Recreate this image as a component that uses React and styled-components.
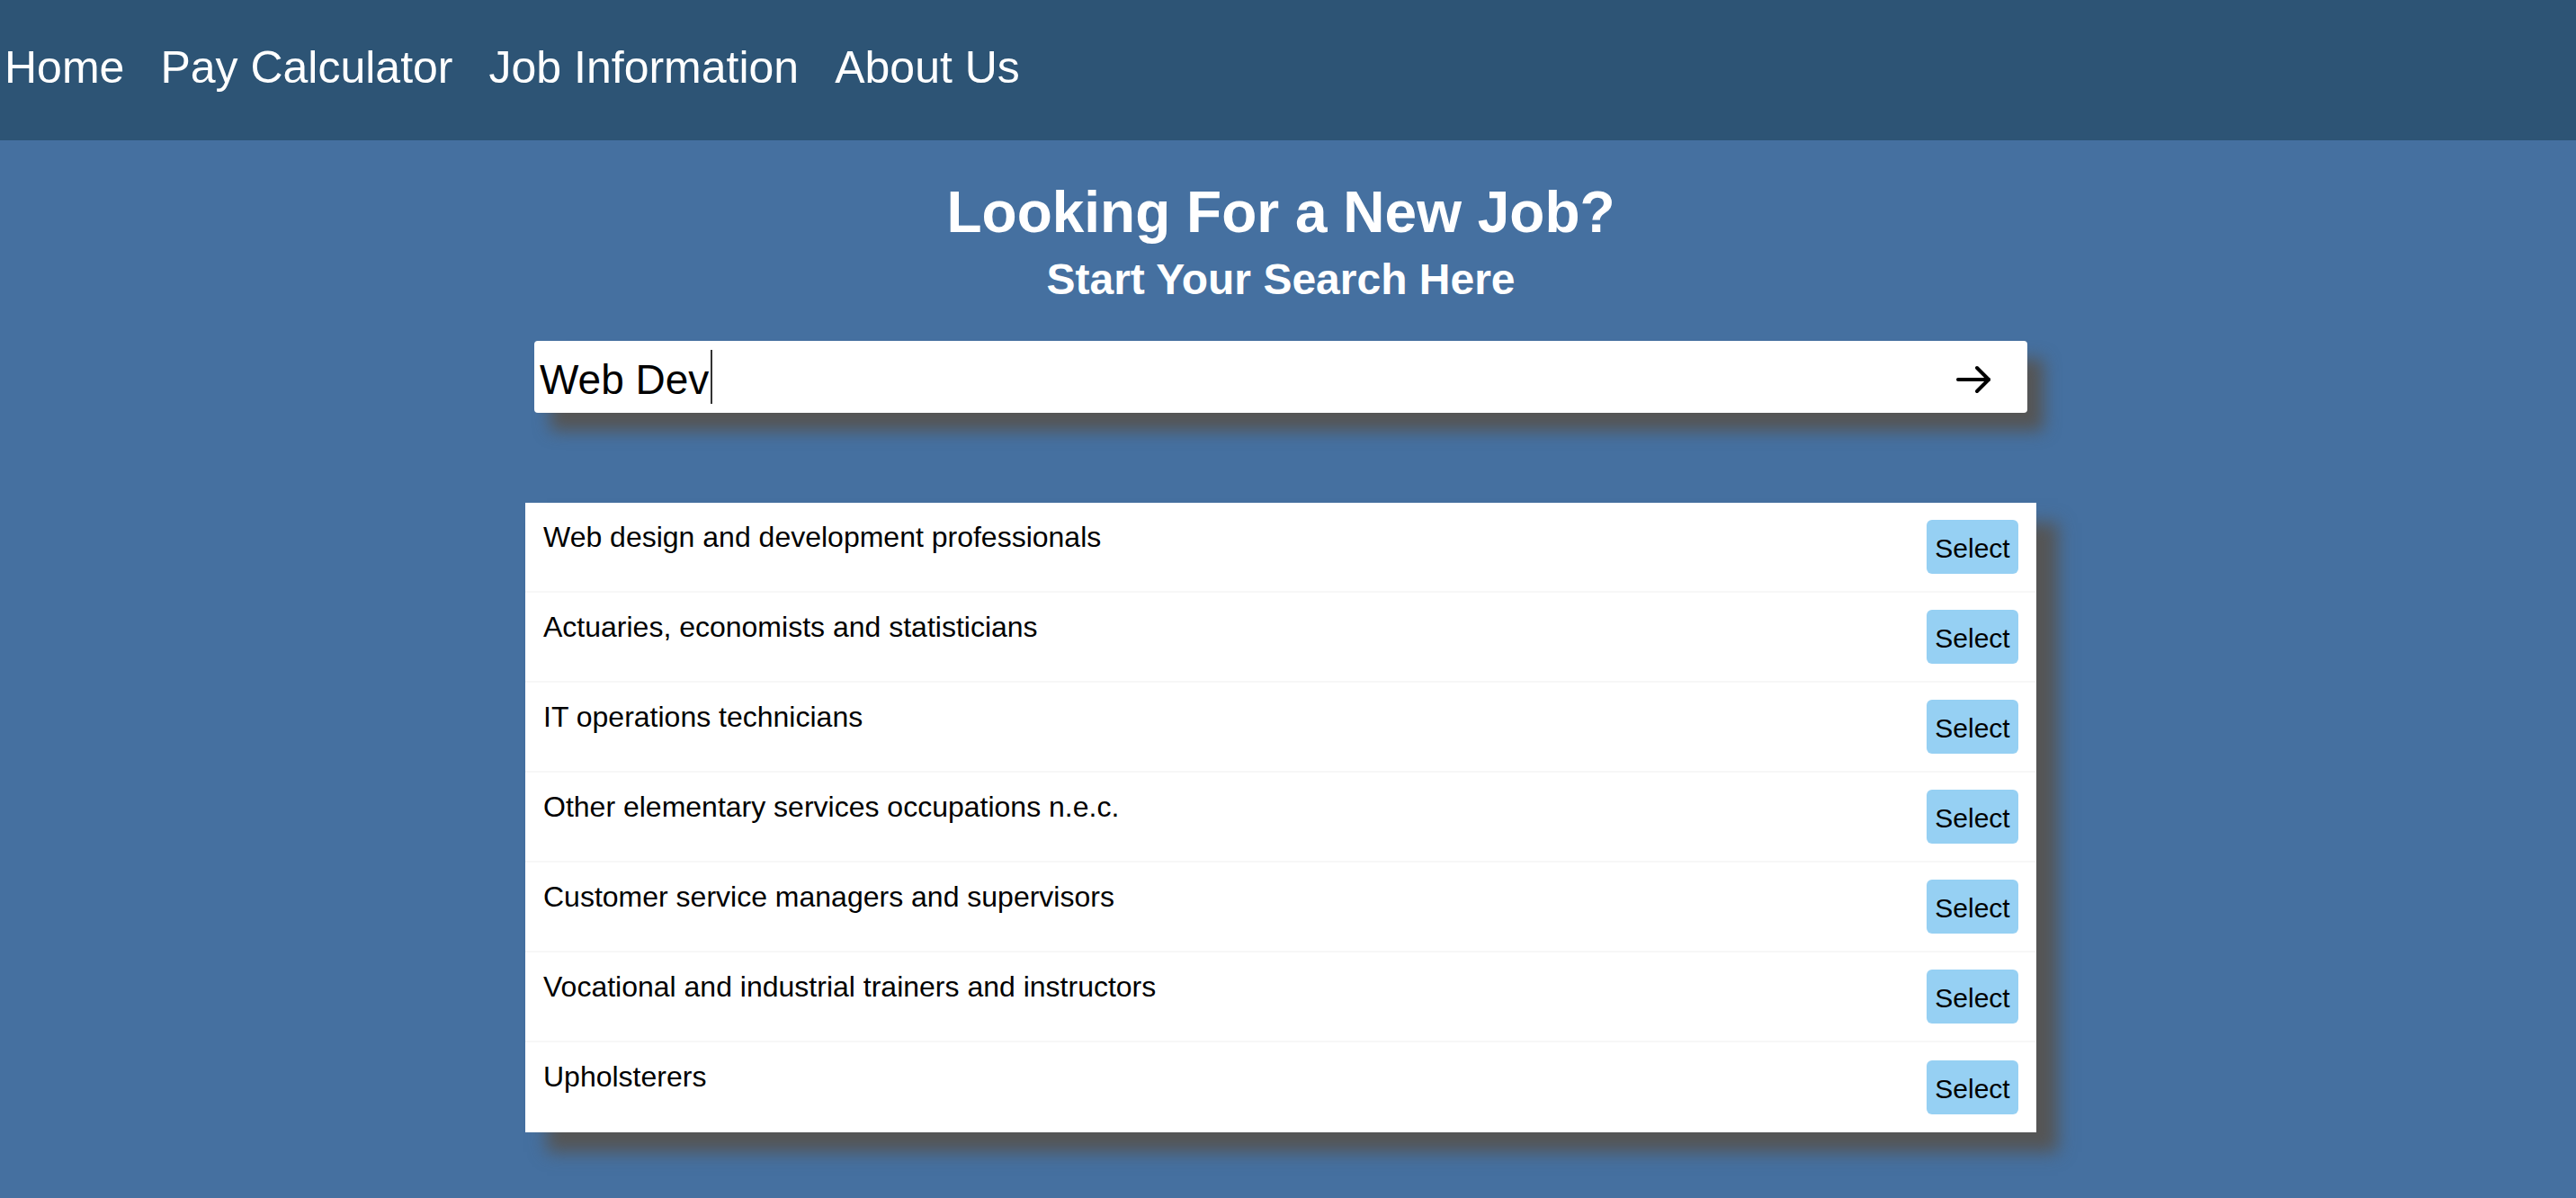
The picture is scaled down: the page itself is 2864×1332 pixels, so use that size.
import React, { useState } from 'react';
import styled, { createGlobalStyle } from 'styled-components';

const GlobalStyle = createGlobalStyle`
  html, body {
    margin: 0;
    padding: 0;
    background: #4570a0;
    font-family: "Liberation Sans", Arial, sans-serif;
  }
`;

const Page = styled.div`
  min-height: 100vh;
  background: #4570a0;
`;

const NavBar = styled.nav`
  height: 156px;
  background: #2d5475;
  display: flex;
  align-items: center;
  gap: 40px;
  padding: 0 0 6px 5px;
  box-sizing: border-box;
`;

const NavLink = styled.a`
  color: #fff;
  font-size: 50px;
  text-decoration: none;
  cursor: pointer;
`;

const Main = styled.main`
  display: flex;
  flex-direction: column;
  align-items: center;
  padding-right: 16px;
  padding-bottom: 40px;
`;

const Title = styled.h1`
  margin: 43px 0 0;
  color: #fff;
  font-size: 64px;
  font-weight: bold;
`;

const Subtitle = styled.h2`
  margin: 10px 0 0;
  color: #fff;
  font-size: 48px;
  font-weight: bold;
`;

const SearchBox = styled.form`
  margin-top: 41px;
  width: 1660px;
  height: 80px;
  background: #fff;
  border-radius: 4px;
  box-shadow: 18px 20px 18px #555;
  display: flex;
  align-items: center;
  padding: 0 40px 0 6px;
  box-sizing: border-box;
`;

const InputWrap = styled.div`
  position: relative;
  flex: 1;
  height: 100%;
  display: flex;
  align-items: center;
`;

const SearchInput = styled.input`
  width: 100%;
  border: none;
  outline: none;
  background: transparent;
  font-family: "Liberation Sans", Arial, sans-serif;
  font-size: 46px;
  color: #000;
  caret-color: transparent;
  padding: 5px 0 0;
`;

const CaretLayer = styled.div`
  position: absolute;
  inset: 0;
  display: flex;
  align-items: center;
  pointer-events: none;
`;

const Mirror = styled.span`
  font-size: 46px;
  white-space: pre;
  color: transparent;
`;

const Caret = styled.span`
  width: 2px;
  height: 60px;
  margin-left: 2px;
  background: #333;
`;

const SubmitButton = styled.button`
  border: none;
  background: transparent;
  padding: 5px 0 0;
  display: flex;
  cursor: pointer;
`;

const ResultList = styled.ul`
  list-style: none;
  margin: 100px 0 0;
  padding: 0;
  width: 1680px;
  background: #fff;
  box-shadow: 24px 22px 18px #555;
`;

const ResultRow = styled.li`
  height: 100px;
  display: flex;
  justify-content: space-between;
  align-items: center;
  padding: 0 20px;
  box-sizing: border-box;
  border-bottom: ${p => (p.last ? 'none' : '2px solid #f7f7f7')};
`;

const JobName = styled.span`
  align-self: flex-start;
  margin-top: 20px;
  font-size: 32px;
  color: #000;
`;

const SelectButton = styled.button`
  width: 102px;
  height: 60px;
  border: none;
  border-radius: 6px;
  background: #96d0f3;
  color: #000;
  font-family: "Liberation Sans", Arial, sans-serif;
  font-size: 30px;
  padding: 4px 0 0;
  cursor: pointer;
`;

const ArrowIcon = () => (
  <svg width="40" height="32" viewBox="0 0 40 32" fill="none" stroke="#000" strokeWidth="4" strokeLinecap="round" strokeLinejoin="round">
    <path d="M3 16h34" />
    <path d="M24 3l13 13-13 13" />
  </svg>
);

const jobs = [
  'Web design and development professionals',
  'Actuaries, economists and statisticians',
  'IT operations technicians',
  'Other elementary services occupations n.e.c.',
  'Customer service managers and supervisors',
  'Vocational and industrial trainers and instructors',
  'Upholsterers',
];

export default function App() {
  const [query, setQuery] = useState('Web Dev');

  return (
    <Page>
      <GlobalStyle />
      <NavBar>
        <NavLink>Home</NavLink>
        <NavLink>Pay Calculator</NavLink>
        <NavLink>Job Information</NavLink>
        <NavLink>About Us</NavLink>
      </NavBar>
      <Main>
        <Title>Looking For a New Job?</Title>
        <Subtitle>Start Your Search Here</Subtitle>
        <SearchBox onSubmit={e => e.preventDefault()}>
          <InputWrap>
            <SearchInput value={query} onChange={e => setQuery(e.target.value)} />
            <CaretLayer>
              <Mirror>{query}</Mirror>
              <Caret />
            </CaretLayer>
          </InputWrap>
          <SubmitButton type="submit">
            <ArrowIcon />
          </SubmitButton>
        </SearchBox>
        <ResultList>
          {jobs.map((job, i) => (
            <ResultRow key={job} last={i === jobs.length - 1}>
              <JobName>{job}</JobName>
              <SelectButton>Select</SelectButton>
            </ResultRow>
          ))}
        </ResultList>
      </Main>
    </Page>
  );
}
